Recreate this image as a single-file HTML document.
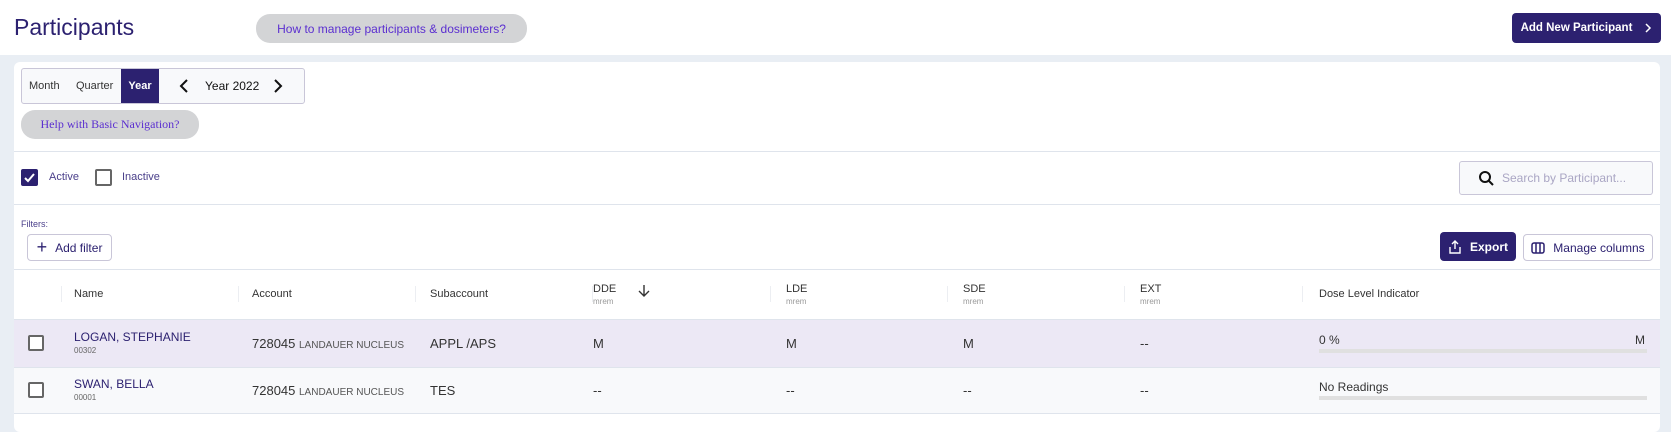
<!DOCTYPE html>
<html><head><style>
*{box-sizing:border-box;margin:0;padding:0}
body{width:1671px;height:421px;overflow:hidden;background:#e9eef4;font-family:"Liberation Sans",sans-serif;position:relative;color:#222}
.a{position:absolute}
.hdr{left:0;top:0;width:1671px;height:55px;background:#fff}
.card{left:14px;top:62px;width:1646px;height:370px;background:#fff;border-radius:6px}
.pill{background:#d3d4d6;border-radius:14px;color:#5b2fd0;font-family:"Liberation Serif",serif;display:flex;align-items:center;justify-content:center}
.btnp{background:#2c2170;color:#fff;border-radius:4px;font-weight:bold;font-size:13px;display:flex;align-items:center;justify-content:center;white-space:nowrap}
.btno{border:1px solid #c9c6d8;border-radius:4px;color:#2c2170;font-size:13px;display:flex;align-items:center;justify-content:center;background:#fff}
.hl{height:1px;background:#dfe4ec;left:14px;width:1646px}
.th{font-size:11px;color:#333;top:288px}
.sub{font-size:8px;color:#999;top:302px}
.cb{width:16px;height:16px;border:2px solid #666;border-radius:2px;background:#fff}
.cell{font-size:13px;color:#333}
.sep{width:1px;height:16px;background:#eceef2;top:286px}
</style></head><body>
<div class="a hdr"></div>
<div class="a" style="left:14px;top:14px;font-size:23px;color:#2c2170">Participants</div>
<div class="a pill" style="left:256px;top:14px;width:271px;height:29px;font-size:12px;font-family:'Liberation Sans',sans-serif">How to manage participants &amp; dosimeters?</div>
<div class="a btnp" style="left:1512px;top:13px;width:149px;height:30px;font-size:11.5px">Add New Participant<svg width="8" height="12" style="margin-left:12px"><path d="M2 2l4 4-4 4" stroke="#fff" stroke-width="1.5" fill="none"/></svg></div>
<div class="a card"></div>
<div class="a" style="left:21px;top:68px;width:284px;height:36px;border:1px solid #c9c6d8;border-radius:3px;background:#f8f9fb"></div>
<div class="a" style="left:29px;top:80px;font-size:11px;color:#333">Month</div>
<div class="a" style="left:76px;top:80px;font-size:11px;color:#333">Quarter</div>
<div class="a" style="left:121px;top:69px;width:38px;height:34px;background:#2c2170;color:#fff;font-size:11px;font-weight:bold;display:flex;align-items:center;justify-content:center">Year</div>
<svg class="a" style="left:178px;top:78px" width="12" height="16"><path d="M9 2L3 8l6 6" stroke="#111" stroke-width="2" fill="none"/></svg>
<div class="a" style="left:205px;top:79px;font-size:12px;color:#111">Year 2022</div>
<svg class="a" style="left:272px;top:78px" width="12" height="16"><path d="M3 2l6 6-6 6" stroke="#111" stroke-width="2" fill="none"/></svg>
<div class="a pill" style="left:21px;top:110px;width:178px;height:29px;font-size:12px">Help with Basic Navigation?</div>
<div class="a hl" style="top:151px"></div>
<div class="a" style="left:21px;top:169px;width:17px;height:17px;background:#2c2170;border-radius:2px"><svg width="17" height="17"><path d="M4 9l3 3 6-7" stroke="#fff" stroke-width="2" fill="none"/></svg></div>
<div class="a" style="left:49px;top:171px;font-size:11px;color:#4a3f8a">Active</div>
<div class="a cb" style="left:95px;top:169px;width:17px;height:17px"></div>
<div class="a" style="left:122px;top:171px;font-size:11px;color:#4a3f8a">Inactive</div>
<div class="a" style="left:1459px;top:161px;width:194px;height:34px;border:1px solid #c9c6d8;border-radius:3px;background:#f8f9fb"></div>
<svg class="a" style="left:1478px;top:170px" width="16" height="16"><circle cx="7" cy="7" r="5" stroke="#111" stroke-width="2" fill="none"/><path d="M11 11l4 4" stroke="#111" stroke-width="2"/></svg>
<div class="a" style="left:1502px;top:171px;font-size:12px;color:#aaa6c4">Search by Participant...</div>
<div class="a hl" style="top:204px"></div>
<div class="a" style="left:21px;top:219px;font-size:9px;color:#4a3f8a">Filters:</div>
<div class="a btno" style="left:27px;top:234px;width:85px;height:27px;font-size:12px"><span style="font-size:18px;margin-right:8px;font-weight:300">+</span>Add filter</div>
<div class="a btnp" style="left:1440px;top:232px;width:76px;height:29px;font-size:12px"><svg width="14" height="14" style="margin-right:8px"><path d="M7 9V1M4 4l3-3 3 3M2 7v6h10V7" stroke="#fff" stroke-width="1.4" fill="none"/></svg>Export</div>
<div class="a btno" style="left:1523px;top:234px;width:130px;height:27px;font-size:12px"><svg width="14" height="12" style="margin-right:8px"><rect x="1" y="1" width="12" height="10" rx="2" stroke="#2c2170" stroke-width="1.5" fill="none"/><path d="M5 1v10M9 1v10" stroke="#2c2170" stroke-width="1.5"/></svg>Manage columns</div>
<div class="a hl" style="top:269px"></div>
<div class="a sep" style="left:61px"></div><div class="a sep" style="left:238px"></div><div class="a sep" style="left:415px"></div><div class="a sep" style="left:592px"></div><div class="a sep" style="left:770px"></div><div class="a sep" style="left:947px"></div><div class="a sep" style="left:1124px"></div><div class="a sep" style="left:1302px"></div>
<div class="a th" style="left:74px">Name</div>
<div class="a th" style="left:252px">Account</div>
<div class="a th" style="left:430px">Subaccount</div>
<div class="a th" style="left:593px;top:283px">DDE</div><div class="a sub" style="left:593px;top:297px">mrem</div>
<svg class="a" style="left:638px;top:284px" width="12" height="14"><path d="M6 1v11M1 7l5 5 5-5" stroke="#333" stroke-width="1.4" fill="none"/></svg>
<div class="a th" style="left:786px;top:283px">LDE</div><div class="a sub" style="left:786px;top:297px">mrem</div>
<div class="a th" style="left:963px;top:283px">SDE</div><div class="a sub" style="left:963px;top:297px">mrem</div>
<div class="a th" style="left:1140px;top:283px">EXT</div><div class="a sub" style="left:1140px;top:297px">mrem</div>
<div class="a th" style="left:1319px">Dose Level Indicator</div>
<div class="a" style="left:14px;top:319px;width:1646px;height:48px;background:#ece8f5;border-top:1px solid #dfe4ec"></div>
<div class="a" style="left:14px;top:367px;width:1646px;height:47px;background:#f8f9fb;border-top:1px solid #dfe4ec;border-bottom:1px solid #dfe4ec"></div>
<div class="a cb" style="left:28px;top:335px"></div>
<div class="a cb" style="left:28px;top:382px"></div>
<div class="a" style="left:74px;top:330px;font-size:12px;color:#2c2170">LOGAN, STEPHANIE</div>
<div class="a" style="left:74px;top:346px;font-size:8px;color:#666">00302</div>
<div class="a" style="left:74px;top:377px;font-size:12px;color:#2c2170">SWAN, BELLA</div>
<div class="a" style="left:74px;top:393px;font-size:8px;color:#666">00001</div>
<div class="a cell" style="left:252px;top:336px">728045 <span style="font-size:10px;color:#555">LANDAUER NUCLEUS</span></div>
<div class="a cell" style="left:252px;top:383px">728045 <span style="font-size:10px;color:#555">LANDAUER NUCLEUS</span></div>
<div class="a cell" style="left:430px;top:336px">APPL /APS</div>
<div class="a cell" style="left:430px;top:383px">TES</div>
<div class="a cell" style="left:593px;top:336px">M</div><div class="a cell" style="left:593px;top:383px">--</div>
<div class="a cell" style="left:786px;top:336px">M</div><div class="a cell" style="left:786px;top:383px">--</div>
<div class="a cell" style="left:963px;top:336px">M</div><div class="a cell" style="left:963px;top:383px">--</div>
<div class="a cell" style="left:1140px;top:336px">--</div><div class="a cell" style="left:1140px;top:383px">--</div>
<div class="a" style="left:1319px;top:333px;font-size:12px;color:#333">0 %</div>
<div class="a" style="left:1635px;top:333px;font-size:12px;color:#333">M</div>
<div class="a" style="left:1319px;top:349px;width:328px;height:4px;background:#e0e0e0"></div>
<div class="a" style="left:1319px;top:380px;font-size:12px;color:#333">No Readings</div>
<div class="a" style="left:1319px;top:396px;width:328px;height:4px;background:#e0e0e0"></div>
</body></html>
